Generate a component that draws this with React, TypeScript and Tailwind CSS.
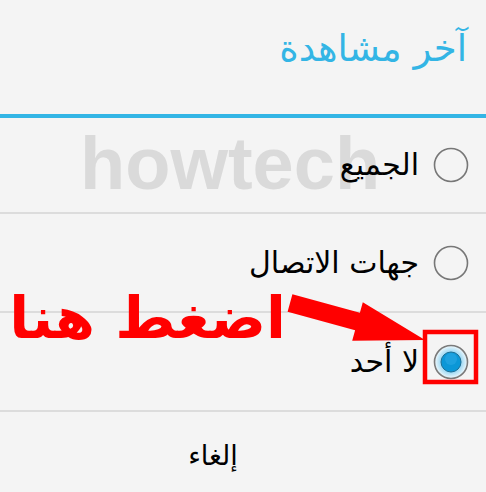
import type { ReactNode } from 'react'

const arabic = { fontFamily: '"DejaVu Sans", "Noto Sans", sans-serif' }

function Radio({ checked }: { checked?: boolean }) {
  return (
    <svg width="36" height="36" viewBox="0 0 36 36" className="shrink-0">
      {checked ? (
        <>
          <defs>
            <radialGradient id="glow" cx="50%" cy="50%" r="50%">
              <stop offset="55%" stopColor="#8fd3f2" />
              <stop offset="100%" stopColor="#f2f9fc" />
            </radialGradient>
          </defs>
          <circle cx="18" cy="18" r="16.5" fill="url(#glow)" stroke="#7a7a7a" strokeWidth="1.6" />
          <circle cx="18" cy="18" r="10" fill="#0b97d7" stroke="#1d6f95" strokeWidth="1" />
          <circle cx="18" cy="15" r="6" fill="#2aa9e4" opacity="0.6" />
        </>
      ) : (
        <circle cx="18" cy="18" r="16.5" fill="none" stroke="#777" strokeWidth="1.6" />
      )}
    </svg>
  )
}

function Row({ label, checked, children }: { label: string; checked?: boolean; children?: ReactNode }) {
  return (
    <div className="relative flex h-[99px] items-center justify-end border-b-2 border-[#dcdcdc] pr-[17px]">
      {children}
      <span className="mr-[14px] text-[30px] leading-none text-black" dir="rtl" style={arabic}>
        {label}
      </span>
      <Radio checked={checked} />
    </div>
  )
}

export default function App() {
  return (
    <div className="relative h-[492px] w-[486px] overflow-hidden bg-[#f4f4f4]">
      <div className="flex h-[114px] items-center justify-end pr-[19px] pb-[18px]">
        <span className="text-[37px] leading-none text-[#33b5e5]" dir="rtl" style={arabic}>
          آخر مشاهدة
        </span>
      </div>
      <div className="h-[4px] bg-[#33b5e5]" />

      <div className="relative h-[96px]">
        <div className="absolute left-[80px] top-[9px] font-['Liberation_Sans'] text-[74px] font-bold leading-none text-[#dadada]">
          howtech
        </div>
        <div className="relative flex h-full items-center justify-end border-b-2 border-[#dcdcdc] pr-[17px]">
          <span className="mr-[14px] text-[30px] leading-none text-black" dir="rtl" style={arabic}>
            الجميع
          </span>
          <Radio />
        </div>
      </div>
      <Row label="جهات الاتصال" />
      <Row label="لا أحد" checked />

      <div className="flex h-[79px] w-[426px] items-center justify-center pt-[8px]">
        <span className="text-[27px] leading-none text-black" dir="rtl" style={arabic}>
          إلغاء
        </span>
      </div>

      {/* annotation */}
      <div
        className="absolute right-[200px] top-[289px] whitespace-nowrap text-[58px] font-bold leading-none text-[#ff0000]"
        dir="rtl"
        style={arabic}
      >
        اضغط هنا
      </div>
      <svg className="pointer-events-none absolute left-0 top-0" width="486" height="492">
        <polygon
          points="292.4,294.3 359.9,312.8 362.8,302.2 425,340 352.2,340.8 355.1,330.2 287.6,311.7"
          fill="#ff0000"
        />
        <rect x="425" y="332" width="51" height="50" fill="none" stroke="#ff0000" strokeWidth="4.5" />
      </svg>
    </div>
  )
}
